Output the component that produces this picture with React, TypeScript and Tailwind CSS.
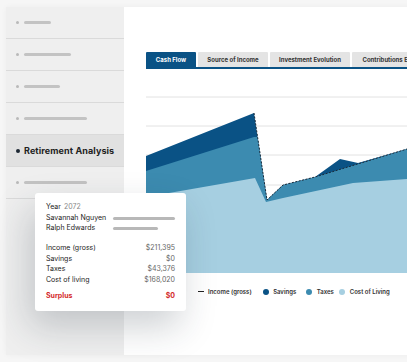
import React from "react";

const sideRows = [27, 47, 36, 63, -1, 63];

const Placeholder = ({ w }: { w: number }) => (
	<div className="flex items-center gap-[5px] pl-[9.5px]">
		<span className="h-[3px] w-[3px] rounded-full bg-[#b9b9b9]" />
		<span className="h-[2.5px] rounded-full bg-[#c3c3c3]" style={{ width: w }} />
	</div>
);

const Sidebar = () => (
	<div className="flex w-[118px] shrink-0 flex-col bg-[#efefef]">
		{sideRows.map((w, i) =>
			w < 0 ? (
				<div
					key={i}
					className="flex h-[32px] items-center gap-[4.5px] border-b border-[#dadada] bg-[#e1e1e1] pl-[9.5px]"
				>
					<span className="h-[4px] w-[4px] rounded-full bg-[#1d2833]" />
					<span className="text-[9px] font-bold tracking-[0.1px] text-[#222]">Retirement Analysis</span>
				</div>
			) : (
				<div key={i} className="flex h-[32px] items-center border-b border-[#dadada]">
					<Placeholder w={w} />
				</div>
			)
		)}
	</div>
);

const tabs = [
	{ label: "Cash Flow", w: "w-[50px]" },
	{ label: "Source of Income", w: "w-[70px]" },
	{ label: "Investment Evolution", w: "w-[80px]" },
	{ label: "Contributions Evolution", w: "w-[90px]" },
];

const Tabs = () => (
	<div className="flex gap-[2px] border-b-2 border-[#0a5285]">
		{tabs.map((t, i) => (
			<div
				key={t.label}
				className={`${t.w} flex h-[15px] shrink-0 items-center justify-center overflow-hidden whitespace-nowrap rounded-t-[1px] text-[6px] font-bold ${
					i === 0 ? "bg-[#0a5285] text-white" : "bg-[#e4e4e4] text-[#333]"
				}`}
			>
				{t.label}
			</div>
		))}
	</div>
);

const Chart = () => (
	<svg width="261" height="183" viewBox="0 0 261 183" className="mt-[21px] block">
		{[7, 36, 65, 95, 124, 153].map((y) => (
			<line key={y} x1="0" x2="261" y1={y} y2={y} stroke="#e2e2e2" strokeWidth="1" />
		))}
		<polygon
			fill="#0a5285"
			points="0,66 108,23 121,110 137,95 169,87 194,69 212,73 261,59 261,183 0,183"
		/>
		<polygon
			fill="#3c8bb0"
			points="0,81 108,47 111.6,47 121,110 137,95 169,87 261,59 261,183 0,183"
		/>
		<polygon fill="#a6cfe1" points="0,107 109,88 120,112 137,108 207,93 261,89 261,183 0,183" />
		<polyline
			fill="none"
			stroke="#1b2a38"
			strokeWidth="1"
			strokeDasharray="2 1.5"
			points="108,23 121,110 137,95 169,87 261,59"
		/>
	</svg>
);

const Dot = ({ c }: { c: string }) => <span className={`block h-[6px] w-[6px] rounded-full ${c}`} />;

const Legend = () => (
	<div className="mt-[14px] flex items-center pl-[52px] text-[6px] font-semibold text-[#333]">
		<span className="h-[1.5px] w-[6px] bg-[#222]" />
		<span className="ml-[4px]">Income (gross)</span>
		<span className="ml-[11px]">
			<Dot c="bg-[#0a5285]" />
		</span>
		<span className="ml-[4.5px]">Savings</span>
		<span className="ml-[10px]">
			<Dot c="bg-[#3c8bb0]" />
		</span>
		<span className="ml-[4.5px]">Taxes</span>
		<span className="ml-[5px]">
			<Dot c="bg-[#a6cfe1]" />
		</span>
		<span className="ml-[5px]">Cost of Living</span>
	</div>
);

const Row = ({ label, value, red }: { label: string; value: string; red?: boolean }) => (
	<div className={`flex justify-between ${red ? "font-bold text-[#d42a2a]" : ""}`}>
		<span className={red ? "" : "text-[#222]"}>{label}</span>
		<span className={red ? "" : "text-[#666]"}>{value}</span>
	</div>
);

const Tooltip = () => (
	<div className="absolute left-[35px] top-[193px] w-[151px] rounded-[3px] bg-white px-[11px] pb-[10px] pt-[9px] text-[7px] leading-[10.67px] shadow-[-6px_16px_36px_rgba(30,45,60,0.22)]">
		<div className="text-[#222]">
			Year <span className="ml-[1px] text-[#888]">2072</span>
		</div>
		<div className="flex items-center text-[#222]">
			<span className="w-[67px]">Savannah Nguyen</span>
			<span className="h-[3px] w-[62px] rounded-full bg-[#b8b8b8]" />
		</div>
		<div className="flex items-center text-[#222]">
			<span className="w-[67px]">Ralph Edwards</span>
			<span className="h-[3px] w-[45px] rounded-full bg-[#b8b8b8]" />
		</div>
		<div className="mt-[9px]">
			<Row label="Income (gross)" value="$211,395" />
			<Row label="Savings" value="$0" />
			<Row label="Taxes" value="$43,376" />
			<Row label="Cost of living" value="$168,020" />
		</div>
		<div className="mt-[5px]">
			<Row label="Surplus" value="$0" red />
		</div>
	</div>
);

export default function App() {
	return (
		<div className="relative h-[362px] w-[407px] overflow-hidden bg-[#f6f6f6] font-['Inter',sans-serif]">
			<div className="ml-[6px] mt-[7px] flex h-[348px] w-[440px] shadow-[0_0_6px_rgba(0,0,0,0.04)]">
				<Sidebar />
				<div className="flex-1 bg-white pl-[22px] pt-[45px]">
					<Tabs />
					<Chart />
					<Legend />
				</div>
			</div>
			<Tooltip />
		</div>
	);
}
